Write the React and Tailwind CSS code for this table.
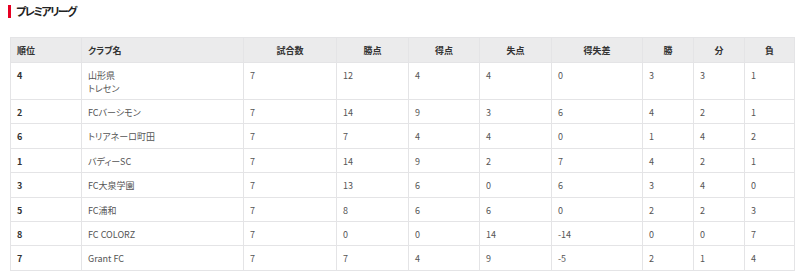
import React from 'react';

const rows = [
  { rank: 4, club: ['山形県', 'トレセン'], games: 7, pts: 12, gf: 4, ga: 4, gd: 0, w: 3, d: 3, l: 1 },
  { rank: 2, club: ['FCバーシモン'], games: 7, pts: 14, gf: 9, ga: 3, gd: 6, w: 4, d: 2, l: 1 },
  { rank: 6, club: ['トリアネーロ町田'], games: 7, pts: 7, gf: 4, ga: 4, gd: 0, w: 1, d: 4, l: 2 },
  { rank: 1, club: ['バディーSC'], games: 7, pts: 14, gf: 9, ga: 2, gd: 7, w: 4, d: 2, l: 1 },
  { rank: 3, club: ['FC大泉学園'], games: 7, pts: 13, gf: 6, ga: 0, gd: 6, w: 3, d: 4, l: 0 },
  { rank: 5, club: ['FC浦和'], games: 7, pts: 8, gf: 6, ga: 6, gd: 0, w: 2, d: 2, l: 3 },
  { rank: 8, club: ['FC COLORZ'], games: 7, pts: 0, gf: 0, ga: 14, gd: -14, w: 0, d: 0, l: 7 },
  { rank: 7, club: ['Grant FC'], games: 7, pts: 7, gf: 4, ga: 9, gd: -5, w: 2, d: 1, l: 4 },
];

const headers = [
  { label: '順位', w: 'w-[71px]', align: 'text-left' },
  { label: 'クラブ名', w: 'w-[162px]', align: 'text-left' },
  { label: '試合数', w: 'w-[93px]', align: 'text-center' },
  { label: '勝点', w: 'w-[72px]', align: 'text-center' },
  { label: '得点', w: 'w-[71px]', align: 'text-center' },
  { label: '失点', w: 'w-[72px]', align: 'text-center' },
  { label: '得失差', w: 'w-[91px]', align: 'text-center' },
  { label: '勝', w: 'w-[51px]', align: 'text-center' },
  { label: '分', w: 'w-[51px]', align: 'text-center' },
  { label: '負', w: 'w-[50px]', align: 'text-center' },
];

const border = 'border border-[#e4e4e6] px-[6px]';
const td = `${border} align-top pt-[7px]`;

export default function App() {
  return (
    <div className="bg-white w-[800px] h-[277px] overflow-hidden font-['Noto_Sans_CJK_JP',sans-serif] [font-feature-settings:'palt']">
      <div className="flex items-center gap-[5px] pl-[8px] pt-[4px] h-[15px] box-content">
        <span className="w-[3px] h-[13px] bg-[#e60023]"></span>
        <h2 className="text-[11px] leading-[13px] tracking-[-1.6px] font-bold text-[#222]">プレミアリーグ</h2>
      </div>
      <div className="pl-[10px] pt-[18px]">
        <table className="w-[784px] table-fixed border-collapse text-[9px] leading-[12px] text-[#555]">
          <thead>
            <tr className="bg-[#ebebec] h-[25px]">
              {headers.map((h) => (
                <th key={h.label} className={`${border} ${h.w} ${h.align} align-middle pt-[1px] font-bold text-[#333]`}>
                  {h.label}
                </th>
              ))}
            </tr>
          </thead>
          <tbody>
            {rows.map((r) => (
              <tr key={r.rank} className={r.club.length > 1 ? 'h-[37px]' : 'h-[24.4px]'}>
                <td className={`${td} font-bold text-[#333]`}>{r.rank}</td>
                <td className={td}>
                  {r.club.map((c, i) => (
                    <div key={i} className={i > 0 ? 'mt-[1px]' : ''}>{c}</div>
                  ))}
                </td>
                <td className={td}>{r.games}</td>
                <td className={td}>{r.pts}</td>
                <td className={td}>{r.gf}</td>
                <td className={td}>{r.ga}</td>
                <td className={td}>{r.gd}</td>
                <td className={td}>{r.w}</td>
                <td className={td}>{r.d}</td>
                <td className={td}>{r.l}</td>
              </tr>
            ))}
          </tbody>
        </table>
      </div>
    </div>
  );
}
